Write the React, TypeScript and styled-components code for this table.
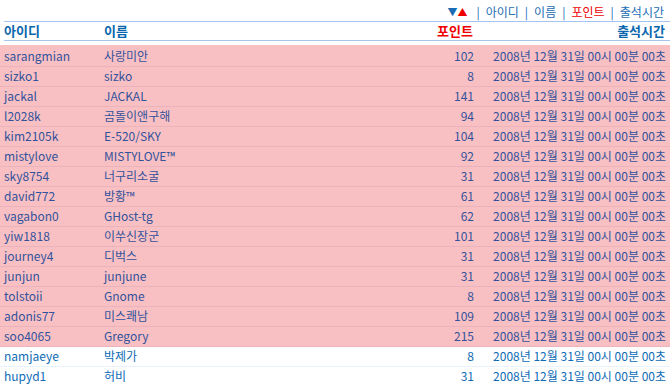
import React from "react";
import styled, { createGlobalStyle } from "styled-components";

const Global = createGlobalStyle`
  html, body { margin: 0; padding: 0; background: #ffffff; }
  body { font-family: "Noto Sans CJK KR", "Noto Sans", sans-serif; font-size: 12px; }
`;

type Member = { id: string; name: string; points: number; hl: boolean };

const members: Member[] = [
  { id: "sarangmian", name: "사랑미안", points: 102, hl: true },
  { id: "sizko1", name: "sizko", points: 8, hl: true },
  { id: "jackal", name: "JACKAL", points: 141, hl: true },
  { id: "l2028k", name: "곰돌이앤구해", points: 94, hl: true },
  { id: "kim2105k", name: "E-520/SKY", points: 104, hl: true },
  { id: "mistylove", name: "MISTYLOVE™", points: 92, hl: true },
  { id: "sky8754", name: "너구리소굴", points: 31, hl: true },
  { id: "david772", name: "방황™", points: 61, hl: true },
  { id: "vagabon0", name: "GHost-tg", points: 62, hl: true },
  { id: "yiw1818", name: "이쑤신장군", points: 101, hl: true },
  { id: "journey4", name: "디벅스", points: 31, hl: true },
  { id: "junjun", name: "junjune", points: 31, hl: true },
  { id: "tolstoii", name: "Gnome", points: 8, hl: true },
  { id: "adonis77", name: "미스쾌남", points: 109, hl: true },
  { id: "soo4065", name: "Gregory", points: 215, hl: true },
  { id: "namjaeye", name: "박제가", points: 8, hl: false },
  { id: "hupyd1", name: "허비", points: 31, hl: false },
];

const DATE = "2008년 12월 31일 00시 00분 00초";

const Page = styled.div`
  width: 670px;
  display: flex;
  flex-direction: column;
`;

const SortBar = styled.div`
  height: 21px;
  display: flex;
  align-items: center;
  justify-content: flex-end;
  gap: 5px;
  padding-right: 6px;
  padding-top: 2px;
  box-sizing: border-box;
  color: #1a6db4;
  line-height: 1;
`;

const Arrows = styled.span`
  display: inline-flex;
  align-items: center;
  font-size: 10px;
  margin-right: 3px;
`;

const Arrow = styled.span<{ $color: string }>`
  color: ${(p) => p.$color};
`;

const Sep = styled.span`
  color: #1a6db4;
  margin: 0 1px;
`;

const SortLink = styled.span<{ $active?: boolean }>`
  color: ${(p) => (p.$active ? "#ee0000" : "#1a6db4")};
`;

const Grid = styled.div`
  display: grid;
  grid-template-columns: 100px 1fr 60px 192px;
  align-items: center;
`;

const HeaderRow = styled(Grid)`
  margin-left: 4px;
  padding-right: 5px;
  height: 18px;
  border-top: 1px solid #a3c5ee;
  border-bottom: 1px solid #a3c5ee;
  margin-bottom: 4px;
  font-weight: bold;
  font-size: 13px;
  color: #0a67ad;
  line-height: 1;
  box-sizing: content-box;
`;

const HeadCell = styled.div<{ $right?: boolean; $red?: boolean }>`
  text-align: ${(p) => (p.$right ? "right" : "left")};
  color: ${(p) => (p.$red ? "#ee0000" : "inherit")};
  padding-bottom: 1px;
`;

const Body = styled.div`
  display: flex;
  flex-direction: column;
`;

const Row = styled(Grid)<{ $hl: boolean }>`
  height: 17px;
  padding: 0 4px 2px;
  background: ${(p) => (p.$hl ? "#f9c0c3" : "#ffffff")};
  border-bottom: 1px solid ${(p) => (p.$hl ? "#ebb3bb" : "#eaf2fb")};
  color: ${(p) => (p.$hl ? "#33529b" : "#0e6bb6")};
  line-height: 1;
  box-sizing: content-box;
  &:first-child {
    padding-top: 2px;
  }
`;

const Cell = styled.div<{ $right?: boolean }>`
  text-align: ${(p) => (p.$right ? "right" : "left")};
  white-space: nowrap;
`;

export default function App() {
  return (
    <Page>
      <Global />
      <SortBar>
        <Arrows>
          <Arrow $color="#1a6db4">▼</Arrow>
          <Arrow $color="#ee0000">▲</Arrow>
        </Arrows>
        <Sep>|</Sep>
        <SortLink>아이디</SortLink>
        <Sep>|</Sep>
        <SortLink>이름</SortLink>
        <Sep>|</Sep>
        <SortLink $active>포인트</SortLink>
        <Sep>|</Sep>
        <SortLink>출석시간</SortLink>
      </SortBar>
      <HeaderRow>
        <HeadCell>아이디</HeadCell>
        <HeadCell>이름</HeadCell>
        <HeadCell $right $red>포인트</HeadCell>
        <HeadCell $right>출석시간</HeadCell>
      </HeaderRow>
      <Body>
        {members.map((m) => (
          <Row key={m.id} $hl={m.hl}>
            <Cell>{m.id}</Cell>
            <Cell>{m.name}</Cell>
            <Cell $right>{m.points}</Cell>
            <Cell $right>{DATE}</Cell>
          </Row>
        ))}
      </Body>
    </Page>
  );
}
